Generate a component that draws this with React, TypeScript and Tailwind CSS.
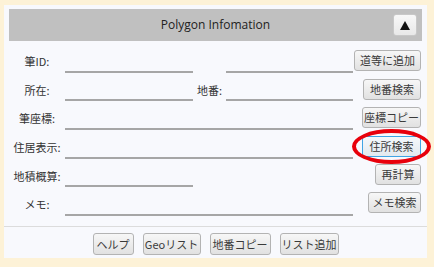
import React from "react";

interface BtnProps {
  label: string;
  width: string;
  focused?: boolean;
  className?: string;
}

const Btn: React.FC<BtnProps> = ({ label, width, focused, className }) => (
  <button
    className={`${width} ${className || ""} h-[21px] shrink-0 rounded-[3px] border ${
      focused
        ? "border-[#3fa4e4] bg-gradient-to-b from-[#f4f8fb] to-[#e3e9ee]"
        : "border-[#b3b3b3] bg-gradient-to-b from-[#f7f7f7] to-[#e1e1e1]"
    } text-[11px] leading-[19px] text-[#3a3a3a] whitespace-nowrap text-center`}
  >
    {label}
  </button>
);

const Field: React.FC<{ width: string }> = ({ width }) => (
  <div className={`${width} h-[22px] shrink-0 border-b-2 border-[#a6a6a6]`} />
);

const Label: React.FC<{ text: string }> = ({ text }) => (
  <div className="w-[56px] shrink-0 text-center text-[11px] text-[#333]">
    {text}
  </div>
);

const Row: React.FC<{ h: string; children: React.ReactNode }> = ({
  h,
  children,
}) => <div className={`${h} flex items-center pl-[5px] pr-[6px]`}>{children}</div>;

export default function App() {
  return (
    <div
      className="w-[434px] h-[267px] bg-[#fdf2d7] pt-[5px] pl-[4px]"
      style={{ fontFamily: '"Noto Sans CJK JP", "Noto Sans", sans-serif' }}
    >
      <div className="relative w-[423px] h-[253px] bg-[#f8f9fd] pt-[4px] flex flex-col">
        <div className="mx-[5px] h-[32px] bg-[#c0c0c0] grid grid-cols-[1fr_auto_1fr] items-center">
          <div />
          <div
            className="text-[12px] text-[#222]"
            style={{ fontFamily: '"Open Sans", "Noto Sans", sans-serif' }}
          >
            Polygon Infomation
          </div>
          <div className="flex justify-end pr-[5px]">
            <button className="w-[24px] h-[22px] rounded-[3px] border border-[#c8c8c8] bg-gradient-to-b from-[#f8f8f8] to-[#e8e8e8] flex items-center justify-center">
              <svg width="10" height="9" viewBox="0 0 10 9">
                <path d="M5 0 L10 9 L0 9 Z" fill="#111" />
              </svg>
            </button>
          </div>
        </div>

        <div className="mt-[6px] flex flex-col">
          <Row h="h-[29px]">
            <Label text="筆ID:" />
            <Field width="w-[128px]" />
            <div className="w-[33px] shrink-0" />
            <Field width="w-[127px]" />
            <Btn label="道等に追加" width="w-[67px]" className="ml-auto -mt-[2px]" />
          </Row>
          <Row h="h-[28px]">
            <Label text="所在:" />
            <Field width="w-[128px]" />
            <div className="w-[33px] shrink-0 pl-[4px] text-[11px] text-[#333]">地番:</div>
            <Field width="w-[127px]" />
            <Btn label="地番検索" width="w-[58px]" className="ml-auto -mt-[2px]" />
          </Row>
          <Row h="h-[29px]">
            <Label text="筆座標:" />
            <Field width="w-[288px]" />
            <Btn label="座標コピー" width="w-[59px]" className="ml-auto -mt-[2px]" />
          </Row>
          <Row h="h-[29px]">
            <Label text="住居表示:" />
            <Field width="w-[288px]" />
            <Btn label="住所検索" width="w-[59px]" focused className="ml-auto -mt-[2px]" />
          </Row>
          <Row h="h-[28px]">
            <Label text="地積概算:" />
            <Field width="w-[128px]" />
            <Btn label="再計算" width="w-[46px]" className="ml-auto -mt-[4px]" />
          </Row>
          <Row h="h-[29px]">
            <Label text="メモ:" />
            <Field width="w-[288px]" />
            <Btn label="メモ検索" width="w-[53px]" className="ml-auto -mt-[4px]" />
          </Row>
        </div>

        <div className="mt-[7px] h-px bg-[#dcdcdc]" />
        <div className="flex justify-center gap-[9px] pt-[6px]">
          <Btn label="ヘルプ" width="w-[41px]" className="h-[22px]" />
          <Btn label="Geoリスト" width="w-[58px]" className="h-[22px]" />
          <Btn label="地番コピー" width="w-[61px]" className="h-[22px]" />
          <Btn label="リスト追加" width="w-[59px]" className="h-[22px]" />
        </div>

        <div className="absolute left-[348px] top-[124px] w-[79px] h-[35px] rounded-[50%] border-[4px] border-[#e8000b] pointer-events-none" />
      </div>
    </div>
  );
}
